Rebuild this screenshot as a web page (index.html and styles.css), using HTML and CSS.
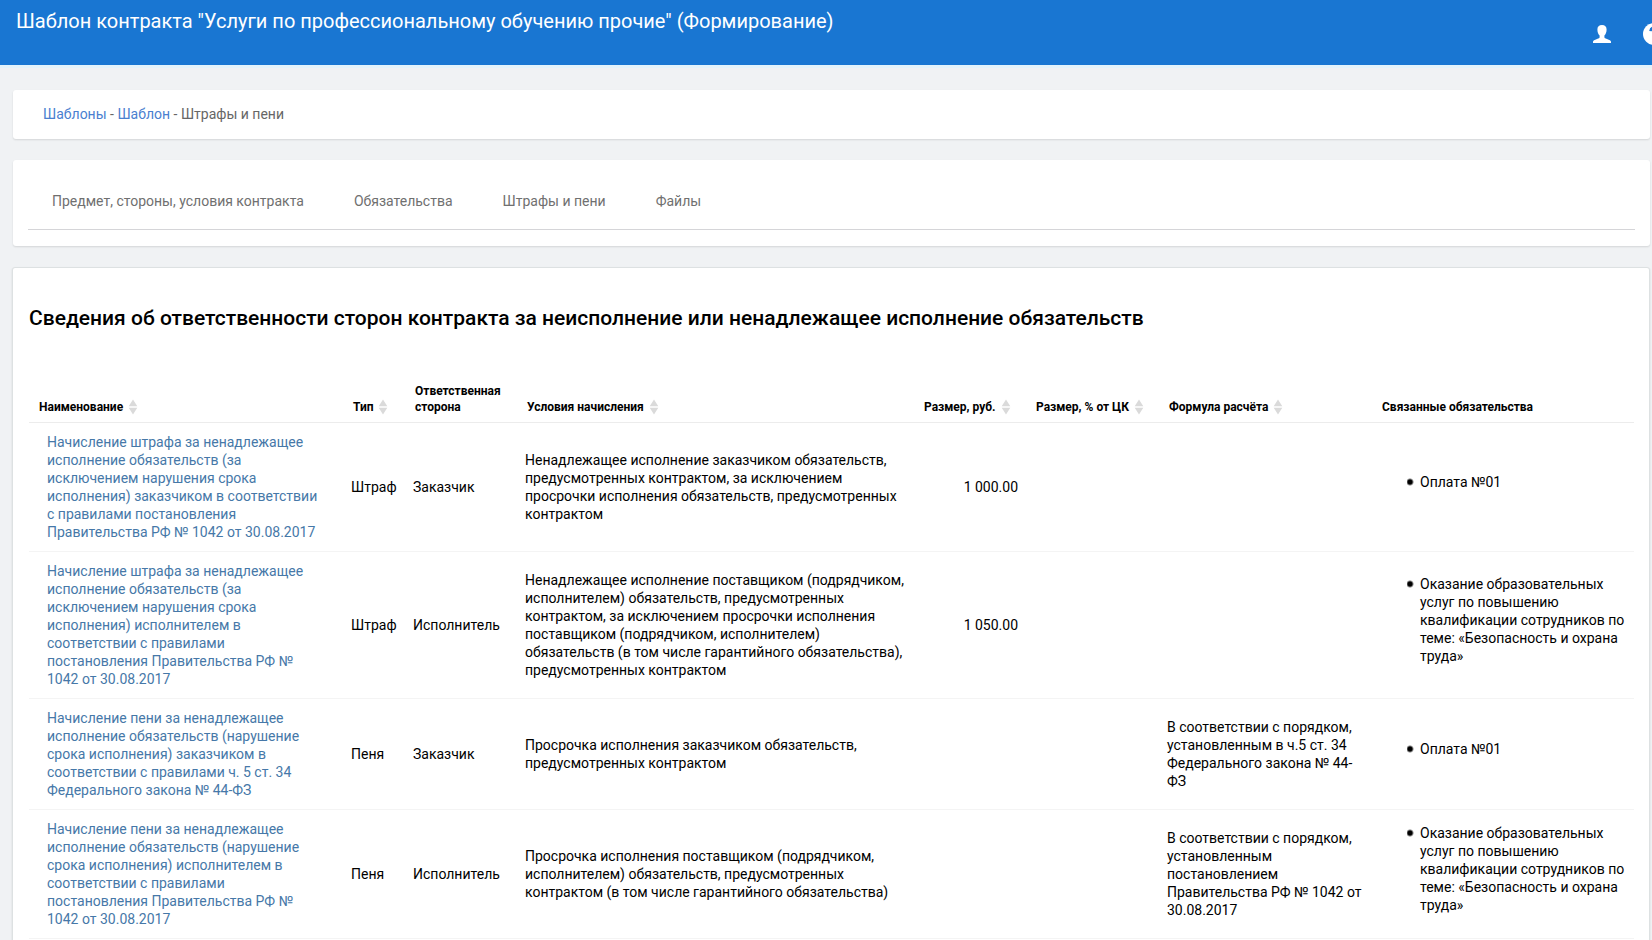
FILE: index.html
```html
<!DOCTYPE html>
<html lang="ru">
<head>
<meta charset="utf-8">
<title>Шаблон контракта</title>
<link rel="stylesheet" href="styles.css">
</head>
<body>
<svg class="defs" aria-hidden="true">
  <symbol id="sort" viewBox="0 0 10 16"><path d="M5 0.500 9.300 7.200H.7zM5 15.500 9.300 8.800H.7z" fill="currentColor"/></symbol>
</svg>
<header class="topbar">
  <h1 class="topbar-title">Шаблон контракта "Услуги по профессиональному обучению прочие" (Формирование)</h1>
  <div class="topbar-actions">
    <button class="icon-button" type="button" aria-label="Профиль">
      <svg width="20" height="20" viewBox="0 0 20 20"><path d="M10 1C7 1 5.400 2.700 5.400 5.500C5.400 8.200 6.300 10.300 7.600 11.600V13.200C7.600 14 6.800 14.300 5 15C2.500 15.900 1 16.500 1 17.800V19H19V17.800C19 16.500 17.500 15.900 15 15C13.200 14.300 12.400 14 12.400 13.200V11.600C13.700 10.300 14.600 8.200 14.600 5.500C14.600 2.700 13 1 10 1Z" fill="#fff"/></svg>
    </button>
    <button class="icon-button" type="button" aria-label="Справка">
      <svg width="22" height="22" viewBox="0 0 22 22"><circle cx="11" cy="11" r="11" fill="#fff"/><path d="M7.500 8.200C7.700 5.900 9.200 4.800 11.200 4.800C13.300 4.800 14.700 6 14.700 7.800C14.700 10.300 11.500 10.300 11.500 13" fill="none" stroke="#1976d2" stroke-width="2.600"/><rect x="10" y="14.500" width="3" height="3" fill="#1976d2"/></svg>
    </button>
  </div>
</header>
<main class="page">
  <nav class="card breadcrumbs" aria-label="Навигация">
    <a href="#">Шаблоны</a> - <a href="#">Шаблон</a> - Штрафы и пени
  </nav>
  <nav class="card tabs-card" aria-label="Разделы">
    <div class="tabs">
      <a href="#">Предмет, стороны, условия контракта</a>
      <a href="#">Обязательства</a>
      <a href="#">Штрафы и пени</a>
      <a href="#">Файлы</a>
    </div>
  </nav>
  <section class="card content">
    <h2 class="content-title">Сведения об ответственности сторон контракта за неисполнение или ненадлежащее исполнение обязательств</h2>
    <table class="grid">
      <colgroup>
        <col class="col-name"><col class="col-type"><col class="col-party"><col><col class="col-sum"><col class="col-percent"><col class="col-formula"><col class="col-related">
      </colgroup>
      <thead>
        <tr>
          <th>Наименование<svg class="sort"><use href="#sort"/></svg></th>
          <th>Тип<svg class="sort"><use href="#sort"/></svg></th>
          <th>Ответственная сторона</th>
          <th>Условия начисления<svg class="sort"><use href="#sort"/></svg></th>
          <th>Размер, руб.<svg class="sort"><use href="#sort"/></svg></th>
          <th>Размер, % от ЦК<svg class="sort"><use href="#sort"/></svg></th>
          <th>Формула расчёта<svg class="sort"><use href="#sort"/></svg></th>
          <th>Связанные обязательства</th>
        </tr>
      </thead>
      <tbody>
        <tr>
          <td class="name"><a href="#">Начисление штрафа за ненадлежащее исполнение обязательств (за исключением нарушения срока исполнения) заказчиком в соответствии с правилами постановления Правительства РФ № 1042 от 30.08.2017</a></td>
          <td>Штраф</td>
          <td>Заказчик</td>
          <td>Ненадлежащее исполнение заказчиком обязательств, предусмотренных контрактом, за исключением просрочки исполнения обязательств, предусмотренных контрактом</td>
          <td class="number">1 000.00</td>
          <td></td>
          <td></td>
          <td><ul><li>Оплата №01</li></ul></td>
        </tr>
        <tr>
          <td class="name"><a href="#">Начисление штрафа за ненадлежащее исполнение обязательств (за исключением нарушения срока исполнения) исполнителем в соответствии с правилами постановления Правительства РФ № 1042 от 30.08.2017</a></td>
          <td>Штраф</td>
          <td>Исполнитель</td>
          <td>Ненадлежащее исполнение поставщиком (подрядчиком, исполнителем) обязательств, предусмотренных контрактом, за исключением просрочки исполнения поставщиком (подрядчиком, исполнителем) обязательств (в том числе гарантийного обязательства), предусмотренных контрактом</td>
          <td class="number">1 050.00</td>
          <td></td>
          <td></td>
          <td><ul><li>Оказание образовательных услуг по повышению квалификации сотрудников по теме: «Безопасность и охрана труда»</li></ul></td>
        </tr>
        <tr>
          <td class="name"><a href="#">Начисление пени за ненадлежащее исполнение обязательств (нарушение срока исполнения) заказчиком в соответствии с правилами ч. 5 ст. 34 Федерального закона № 44-ФЗ</a></td>
          <td>Пеня</td>
          <td>Заказчик</td>
          <td>Просрочка исполнения заказчиком обязательств, предусмотренных контрактом</td>
          <td></td>
          <td></td>
          <td>В соответствии с порядком, установленным в ч.5 ст. 34 Федерального закона № 44-ФЗ</td>
          <td><ul><li>Оплата №01</li></ul></td>
        </tr>
        <tr>
          <td class="name"><a href="#">Начисление пени за ненадлежащее исполнение обязательств (нарушение срока исполнения) исполнителем в соответствии с правилами постановления Правительства РФ № 1042 от 30.08.2017</a></td>
          <td>Пеня</td>
          <td>Исполнитель</td>
          <td>Просрочка исполнения поставщиком (подрядчиком, исполнителем) обязательств, предусмотренных контрактом (в том числе гарантийного обязательства)</td>
          <td></td>
          <td></td>
          <td>В соответствии с порядком, установленным постановлением Правительства РФ № 1042 от 30.08.2017</td>
          <td><ul><li>Оказание образовательных услуг по повышению квалификации сотрудников по теме: «Безопасность и охрана труда»</li></ul></td>
        </tr>
      </tbody>
    </table>
  </section>
</main>
</body>
</html>
```
FILE: styles.css
```css
* { box-sizing: border-box; }

html { scrollbar-width: none; }

body {
  margin: 0;
  background: #f0f2f4;
  color: #000;
  font: 14px/18px Roboto, "Liberation Sans", sans-serif;
}

a { text-decoration: none; }

.defs { display: none; }

.topbar {
  display: flex;
  justify-content: space-between;
  align-items: flex-start;
  padding-left: 16px;
  overflow: hidden;
  background: #1976d2;
  border-bottom: 3px solid #e3f3fb;
}

.topbar-title {
  margin: 0;
  padding-top: 8px;
  color: #fff;
  font-size: 20px;
  font-weight: 400;
  line-height: 26px;
}

.topbar-actions {
  display: flex;
  gap: 31px;
  align-items: center;
  height: 65px;
  margin-right: -13px;
  padding-top: 3px;
}

.icon-button {
  display: flex;
  padding: 0;
  border: 0;
  background: none;
}

.page {
  display: flex;
  flex-direction: column;
  gap: 21px;
  padding: 22px 2px 0 13px;
}

.card {
  background: #fff;
  border-radius: 3px;
  box-shadow: 0 1px 2px rgba(0, 0, 0, 0.12);
}

.breadcrumbs {
  padding: 15px 30px 16px;
  color: #666;
}

.breadcrumbs a { color: #4a80d0; }

.tabs-card { padding: 14px 15px 16px; }

.tabs {
  display: flex;
  gap: 50px;
  padding: 18px 24px 19px;
  border-bottom: 1px solid #d5d5d8;
}

.tabs a { color: #707070; }

.content {
  margin-left: -1px;
  padding: 36px 15px 24px 16px;
  border: 1px solid #dde1e2;
}

.content-title {
  margin: 0 0 47px;
  font-size: 21px;
  font-weight: 500;
  line-height: 28px;
}

.grid {
  width: 100%;
  table-layout: fixed;
  border-collapse: separate;
  border-spacing: 0;
}

.col-name { width: 314px; }
.col-type { width: 62px; }
.col-party { width: 112px; }
.col-sum { width: 112px; }
.col-percent { width: 133px; }
.col-formula { width: 213px; }
.col-related { width: 262px; }

th {
  padding: 4px 10px 7px;
  border-bottom: 1px solid #ececec;
  font-size: 12px;
  font-weight: 700;
  line-height: 16px;
  text-align: left;
  vertical-align: bottom;
}

th:nth-child(2), th:nth-child(5), th:nth-child(6) {
  padding-right: 0;
  white-space: nowrap;
}

.sort {
  width: 10px;
  height: 16px;
  margin-left: 5px;
  color: #dadada;
  vertical-align: top;
}

td {
  padding: 10px 8px;
  border-bottom: 1px solid #f4f4f4;
  vertical-align: middle;
}

td.name { padding: 10px 18px; }

td.name a { color: #4678a8; }

.number { text-align: right; }

td ul {
  margin: 0 0 10px;
  padding-left: 27px;
  list-style: none;
}

td li {
  padding-left: 13px;
  background: radial-gradient(circle at 3px 9px, #000 2px, transparent 4px);
}
```
